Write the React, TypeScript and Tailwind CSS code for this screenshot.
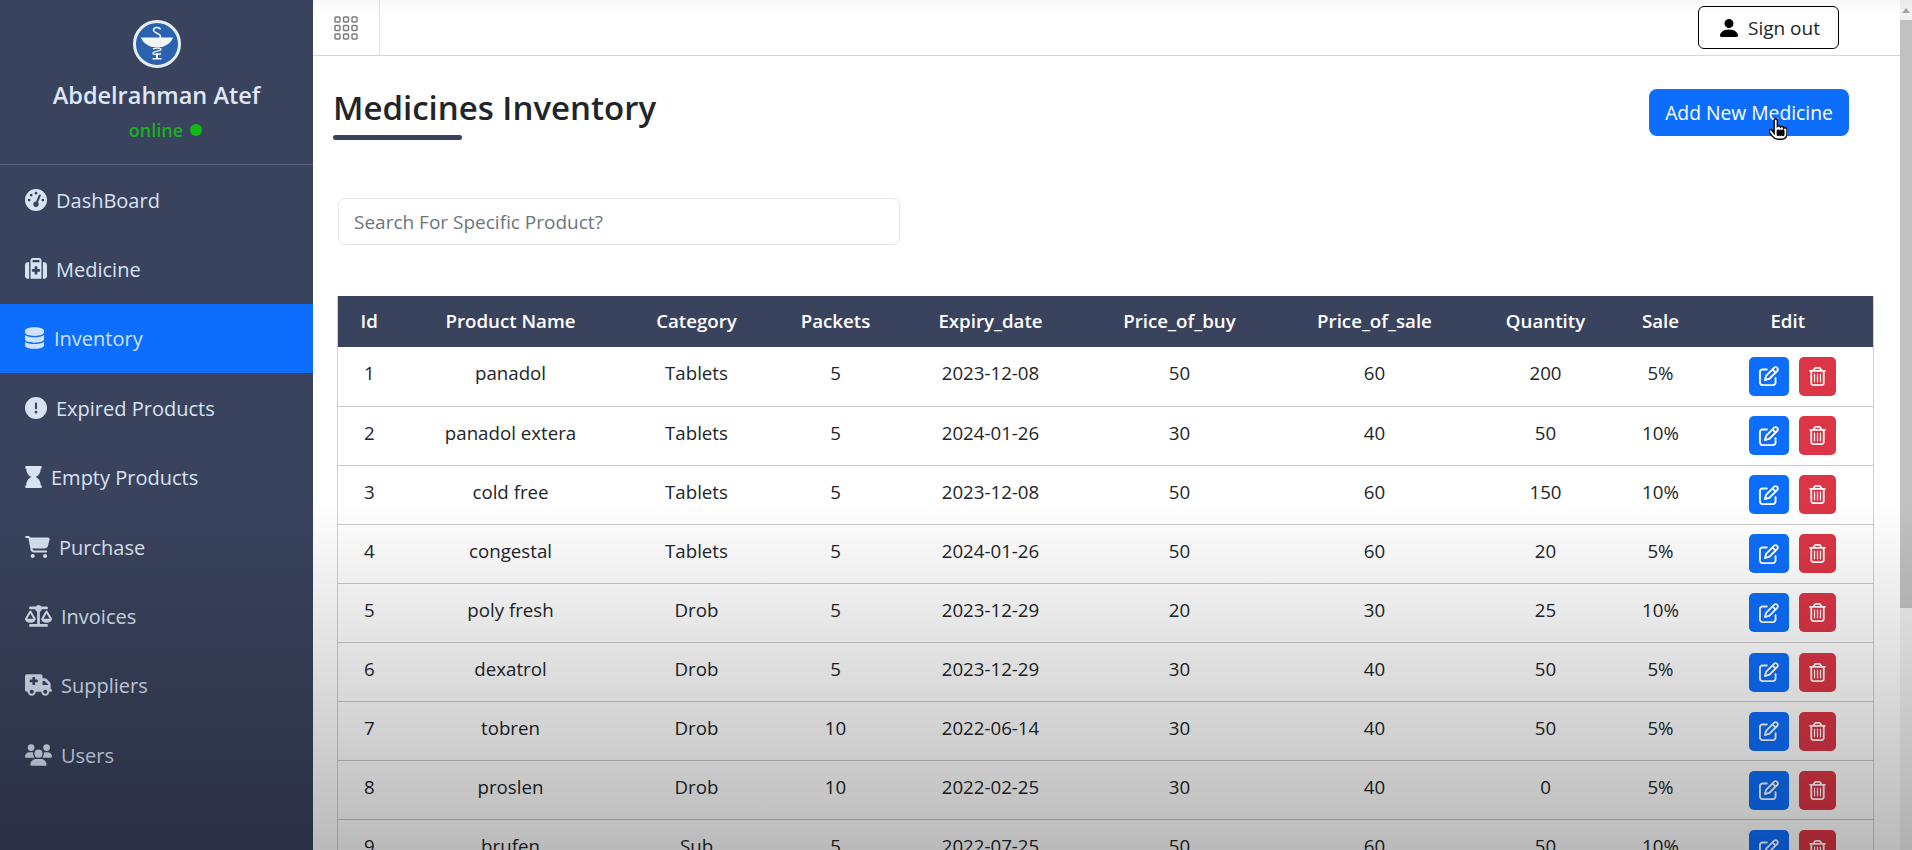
import { FaHourglass } from "react-icons/fa";
import { FaCartShopping, FaCircleExclamation, FaDatabase, FaGaugeHigh, FaHandPointer, FaRegPenToSquare, FaRegTrashCan, FaScaleBalanced, FaSuitcaseMedical, FaTruckMedical, FaUsers } from "react-icons/fa6";
import { BsPersonFill } from "react-icons/bs";

const navItems = [
  { label: "DashBoard", icon: FaGaugeHigh, iconClass: "w-[22px] h-[22px]", gap: "ml-[9px]" },
  { label: "Medicine", icon: FaSuitcaseMedical, iconClass: "w-[22px] h-[22px]", gap: "ml-[9px]" },
  { label: "Inventory", icon: FaDatabase, iconClass: "w-[19px] h-[22px]", gap: "ml-[10px]", active: true },
  { label: "Expired Products", icon: FaCircleExclamation, iconClass: "w-[22px] h-[22px]", gap: "ml-[9px]" },
  { label: "Empty Products", icon: FaHourglass, iconClass: "w-[17px] h-[22px]", gap: "ml-[9px]" },
  { label: "Purchase", icon: FaCartShopping, iconClass: "w-[25px] h-[22px]", gap: "ml-[9px]" },
  { label: "Invoices", icon: FaScaleBalanced, iconClass: "w-[27px] h-[22px]", gap: "ml-[9px]" },
  { label: "Suppliers", icon: FaTruckMedical, iconClass: "w-[27px] h-[22px]", gap: "ml-[9px]" },
  { label: "Users", icon: FaUsers, iconClass: "w-[27px] h-[22px]", gap: "ml-[9px]" },
];

const rows = [
  ["1", "panadol", "Tablets", "5", "2023-12-08", "50", "60", "200", "5%"],
  ["2", "panadol extera", "Tablets", "5", "2024-01-26", "30", "40", "50", "10%"],
  ["3", "cold free", "Tablets", "5", "2023-12-08", "50", "60", "150", "10%"],
  ["4", "congestal", "Tablets", "5", "2024-01-26", "50", "60", "20", "5%"],
  ["5", "poly fresh", "Drob", "5", "2023-12-29", "20", "30", "25", "10%"],
  ["6", "dexatrol", "Drob", "5", "2023-12-29", "30", "40", "50", "5%"],
  ["7", "tobren", "Drob", "10", "2022-06-14", "30", "40", "50", "5%"],
  ["8", "proslen", "Drob", "10", "2022-02-25", "30", "40", "0", "5%"],
  ["9", "brufen", "Sub", "5", "2022-07-25", "50", "60", "50", "10%"],
];

const columns = [
  { title: "Id", width: "w-[63px]" },
  { title: "Product Name", width: "w-[220px]" },
  { title: "Category", width: "w-[152px]" },
  { title: "Packets", width: "w-[126px]" },
  { title: "Expiry_date", width: "w-[184px]" },
  { title: "Price_of_buy", width: "w-[194px]" },
  { title: "Price_of_sale", width: "w-[196px]" },
  { title: "Quantity", width: "w-[146px]" },
  { title: "Sale", width: "w-[84px]" },
  { title: "Edit", width: "w-[171px]" },
];

function Logo() {
  return (
    <svg viewBox="0 0 48 48" className="h-[48px] w-[48px]">
      <circle cx="24" cy="24" r="22.5" fill="#2a62b0" stroke="#e8edf5" strokeWidth="3" />
      <path d="M8 17.500h32c-1.500 5-7 8.500-11 9.500h-10c-4-1-9.500-4.500-11-9.500z" fill="#f2f5fa" />
      <path d="M19.500 38h9v1.500h-9zM23 33h2v5h-2z" fill="#f2f5fa" />
      <path d="M27.500 9.500c-1-2.800-7-2.800-7 .5 0 3.500 7 3 7 6.500 0 1.500-1 2-1 2" fill="none" stroke="#f2f5fa" strokeWidth="1.500" />
      <path d="M20 29c3-1.500 8-1.200 8 .5s-8 1.500-8 3.500 5 2 8 .5" fill="none" stroke="#f2f5fa" strokeWidth="1.400" />
    </svg>
  );
}

function GridIcon() {
  const cells = [0, 8.500, 17];
  return (
    <svg viewBox="0 0 24 24" className="h-[24px] w-[24px]" fill="none" stroke="#7d7d7d" strokeWidth="1.500">
      {cells.map((y) => cells.map((x) => <rect key={`${x}-${y}`} x={x + 1} y={y + 1} width="5" height="5" rx="1" />))}
    </svg>
  );
}

function Sidebar() {
  return (
    <aside className="w-[313px] shrink-0 bg-[#3a435d] text-[#d9e2f2]">
      <div className="flex h-[165px] flex-col items-center border-b border-[#59627c] pt-[20px]">
        <Logo />
        <div className="mt-[10px] text-[23.500px] font-semibold leading-[34px] text-[#dfe7f5]">Abdelrahman Atef</div>
        <div className="mt-[5px] flex items-center pl-[18px] text-[18px] font-semibold leading-[26px] text-[#1ab01f]">
          online
          <span className="ml-[7px] h-[12px] w-[12px] rounded-full bg-[#14b814]" />
        </div>
      </div>
      <nav>
        {navItems.map((item) => {
          const Icon = item.icon;
          return (
            <div key={item.label} className={`flex h-[69.400px] items-center pl-[25px] text-[20px] ${item.active ? "bg-[#0d6efd] text-[#cfe2ff]" : ""}`}>
              <Icon className={item.iconClass} />
              <span className={`${item.gap} pt-[2px]`}>{item.label}</span>
            </div>
          );
        })}
      </nav>
    </aside>
  );
}

function ActionButtons() {
  return (
    <div className="flex items-center justify-center gap-[10px] pl-[9px]">
      <button className="flex h-[39px] w-[40px] items-center justify-center rounded-[5px] bg-[#0d6efd] text-white">
        <FaRegPenToSquare className="h-[20px] w-[20px]" />
      </button>
      <button className="flex h-[39px] w-[37px] items-center justify-center rounded-[5px] bg-[#dc3545] text-white">
        <FaRegTrashCan className="h-[19px] w-[17px]" />
      </button>
    </div>
  );
}

export default function App() {
  return (
    <div className="relative h-[850px] overflow-hidden bg-white font-['Open_Sans','Noto_Sans',sans-serif] text-[#212529]">
      <div className="flex h-full">
        <Sidebar />
        <main className="min-w-0 flex-1">
          <header className="flex h-[56px] items-center justify-between border-b border-[#d6d6d6]">
            <div className="flex h-full w-[67px] items-center justify-center border-r border-[#e2e2e2]">
              <GridIcon />
            </div>
            <button className="mr-[61px] flex h-[43px] w-[141px] items-center justify-center gap-[7px] rounded-[6px] border border-black pt-[1px] text-[19px]">
              <BsPersonFill className="h-[24px] w-[24px] text-black" />
              Sign out
            </button>
          </header>

          <div className="flex items-start justify-between pl-[20px] pr-[51px] pt-[30px]">
            <div>
              <h1 className="text-[33px] font-semibold leading-[44px] text-[#212529]">Medicines Inventory</h1>
              <div className="mt-[5px] h-[5px] w-[129px] rounded-full bg-[#3a435d]" />
            </div>
            <button className="relative mt-[3px] h-[47px] w-[200px] rounded-[8px] bg-[#0d6efd] pt-[1px] text-[19.300px] text-white">
              Add New Medicine
              <FaHandPointer className="absolute left-[120px] top-[28px] h-[24px] w-[18px] text-white" stroke="black" strokeWidth={36} />
            </button>
          </div>

          <div className="ml-[25px] mt-[58px] flex h-[47px] w-[562px] items-center rounded-[7px] border border-[#e3e5e8] pl-[15px] pt-[1px] text-[19px] text-[#6c757d]">
            Search For Specific Product?
          </div>

          <table className="ml-[24px] mt-[51px] w-[1536px] table-fixed border-collapse border-x border-[#d0d0d0] text-center text-[18.700px]">
            <thead>
              <tr className="h-[51px] bg-[#3a435d] text-white">
                {columns.map((col) => (
                  <th key={col.title} className={`${col.width} font-semibold`}>{col.title}</th>
                ))}
              </tr>
            </thead>
            <tbody>
              {rows.map((row) => (
                <tr key={row[0]} className="h-[59.100px] border-b border-[#c9c9c9]">
                  {row.map((cell, i) => (
                    <td key={i} className="pb-[6px]">{cell}</td>
                  ))}
                  <td><ActionButtons /></td>
                </tr>
              ))}
            </tbody>
          </table>
        </main>
        <div className="flex w-[12px] shrink-0 flex-col bg-[#f1f1f1]">
          <div className="flex h-[20px] items-center justify-center">
            <span className="h-0 w-0 border-x-[4px] border-b-[5px] border-x-transparent border-b-[#a3a3a3]" />
          </div>
          <div className="h-[588px] bg-[#c1c1c1]" />
        </div>
      </div>
      {/* video fade at the top and bottom of the frame */}
      <div className="pointer-events-none absolute inset-x-0 top-0 h-[14px] bg-gradient-to-b from-black/[0.03] to-transparent" />
      <div className="pointer-events-none absolute inset-x-0 bottom-0 h-[350px] bg-gradient-to-b from-transparent to-black/27" />
    </div>
  );
}
